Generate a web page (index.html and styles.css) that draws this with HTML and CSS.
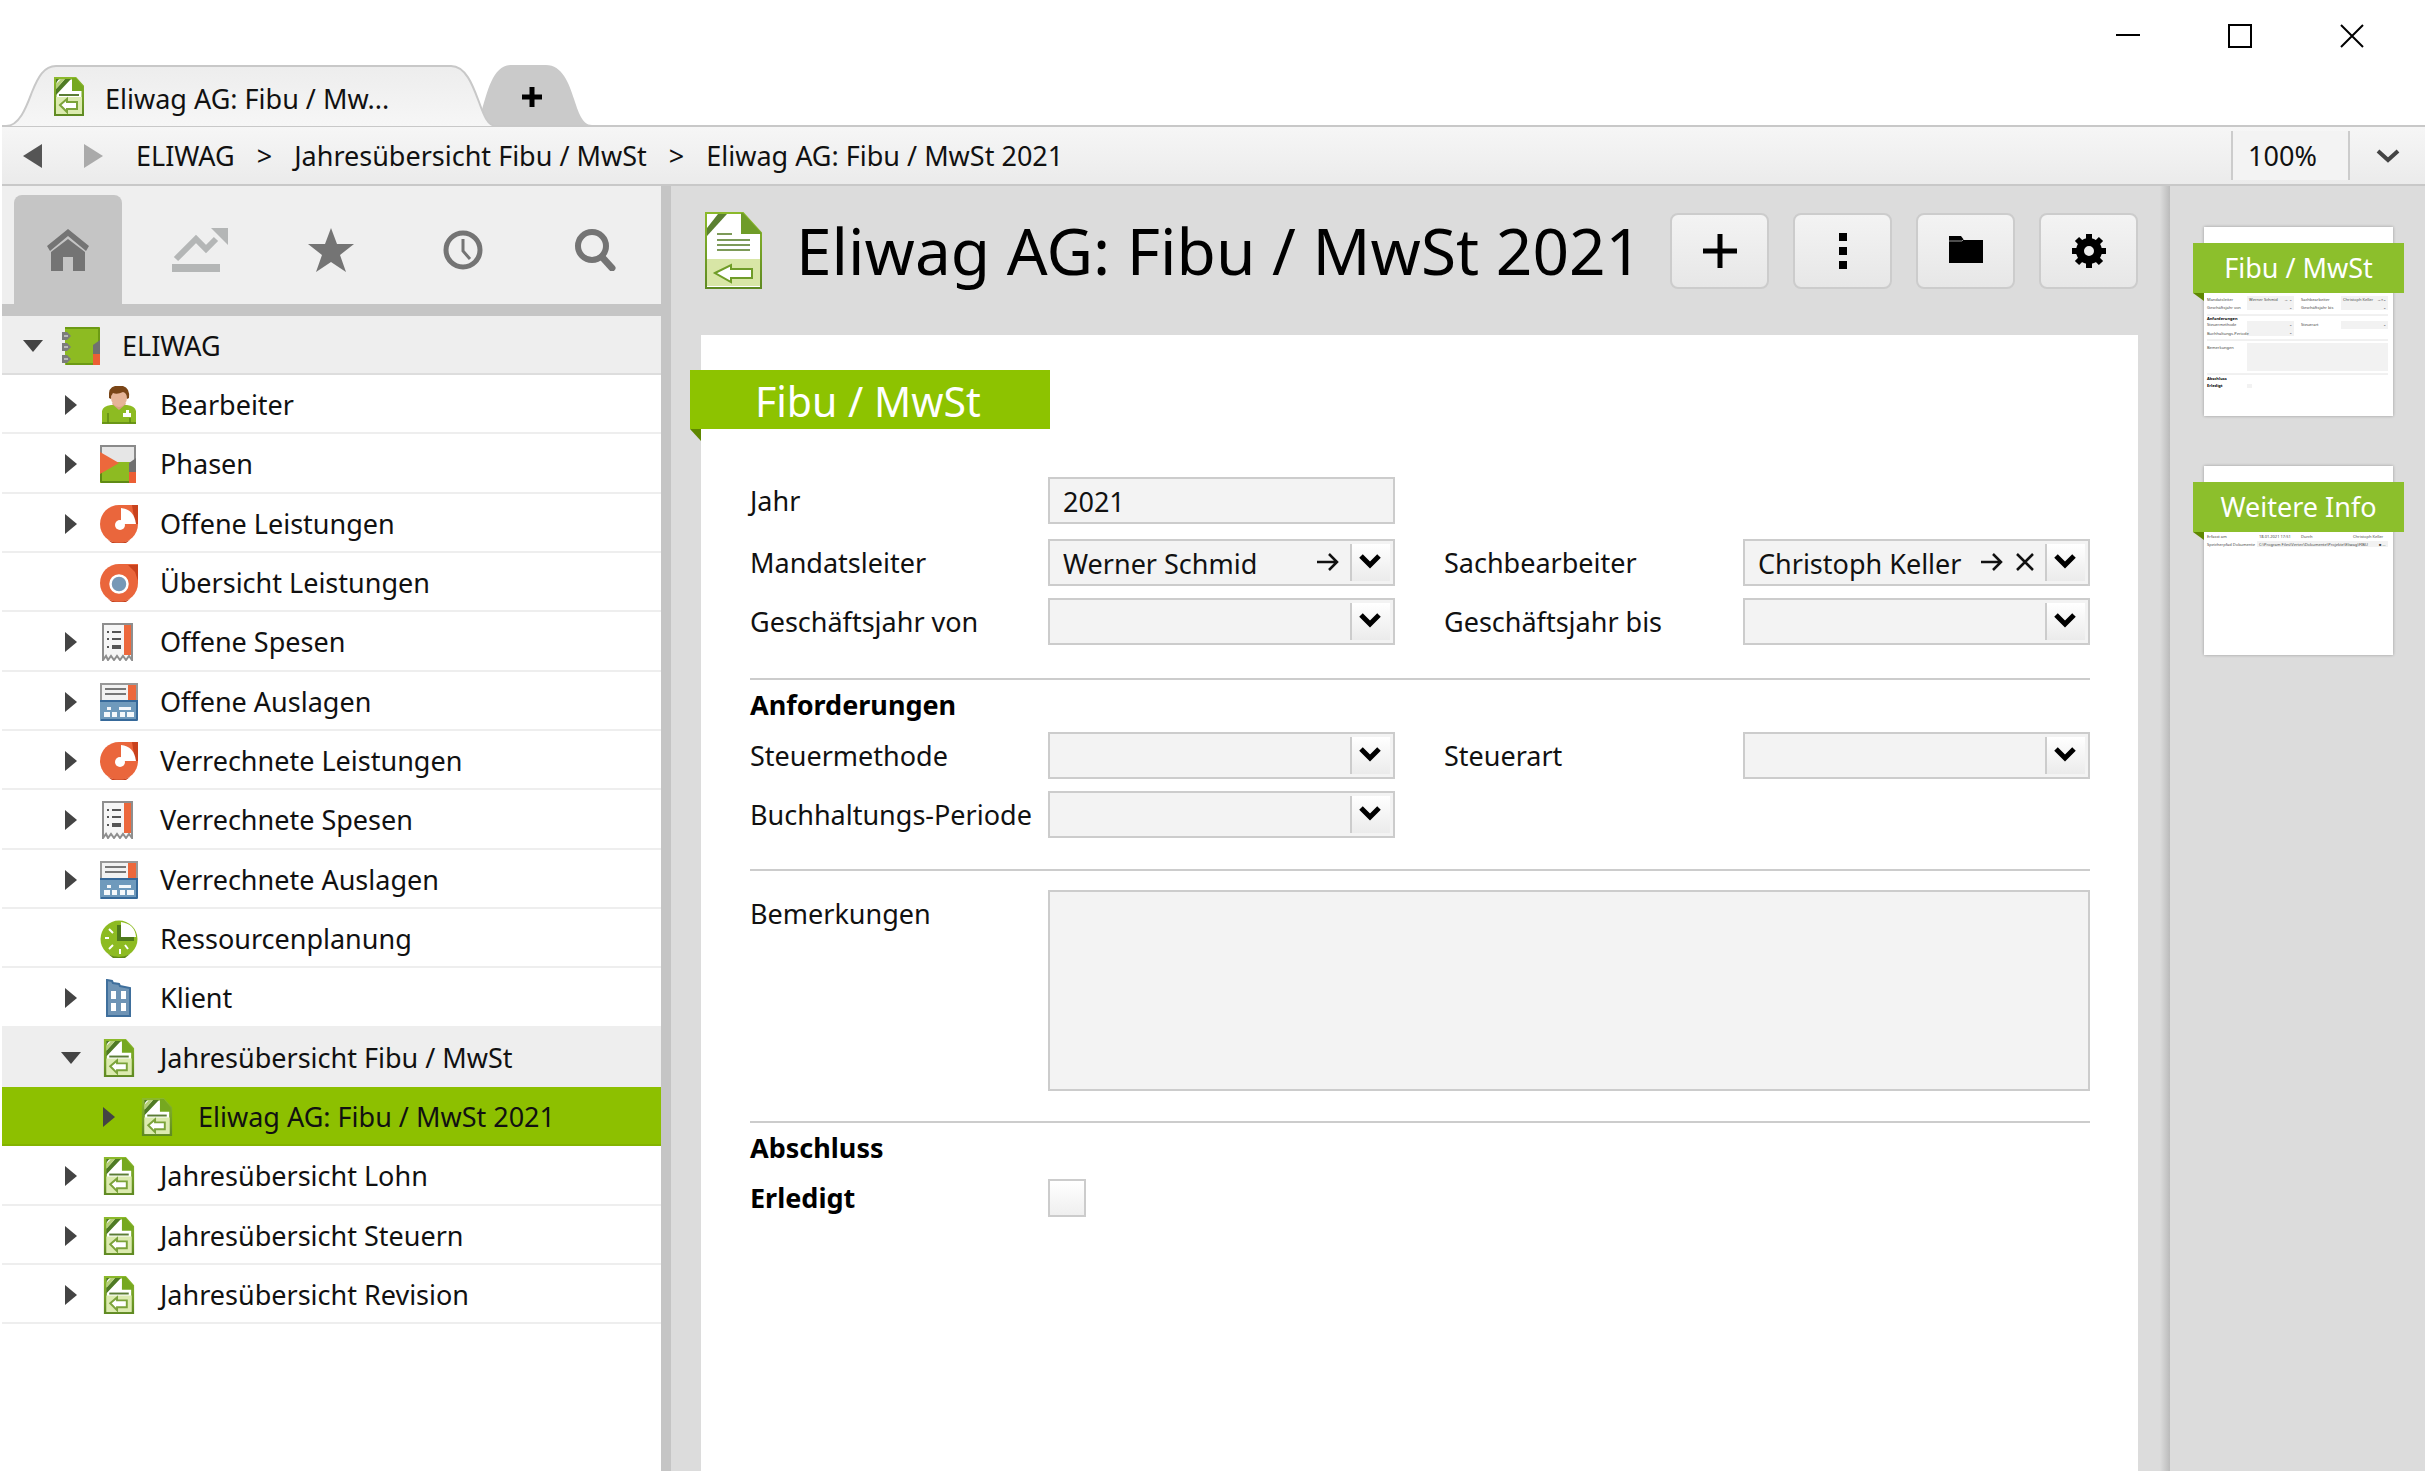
FILE: index.html
```html
<!DOCTYPE html>
<html lang="de">
<head>
    <meta charset="UTF-8">
    <meta name="viewport" content="width=device-width, initial-scale=1.0">
    <title>Eliwag AG: Fibu / MwSt 2021</title>
    <link rel="stylesheet" href="styles.css">
</head>
<body>
    <!-- Icon-Sammlung -->
    <svg class="sprite" aria-hidden="true">
        <defs>
            <linearGradient id="gradTab" x1="0" y1="0" x2="0" y2="1">
                <stop offset="0" stop-color="#ededed"/>
                <stop offset="1" stop-color="#f6f6f6"/>
            </linearGradient>
            <linearGradient id="gradDoc" x1="0" y1="0" x2="0" y2="1">
                <stop offset="0" stop-color="#8bb92b"/>
                <stop offset="1" stop-color="#5f8a22"/>
            </linearGradient>
        </defs>
        <symbol id="i-doc" viewBox="0 0 30 39">
            <path d="M1 1h20l8 9v28H1z" fill="#fff" stroke="url(#gradDoc)" stroke-width="3"/>
            <path d="M2 20h26v17H2z" fill="#dcebb0"/>
            <path d="M18 1h4l7 9v4H18z" fill="#76a820"/>
            <path d="M2 2h3L2 6zM2 12L11 2h6L2 18z" fill="#4f7a24"/>
            <path d="M2 7l5-5h4L2 12z" fill="#b4cf78"/>
            <path d="M5 18h20" stroke="#5b7d35" stroke-width="2"/>
            <path d="M6 28l7-6v3h10v7H13v3z" fill="#fff" stroke="#7ba33a" stroke-width="2"/>
        </symbol>
        <symbol id="i-doc-large" viewBox="0 0 57 77">
            <path d="M1 1h37l18 20v55H1z" fill="#fff" stroke="url(#gradDoc)" stroke-width="2"/>
            <path d="M2 47h53v27H2z" fill="#d8e6a6"/>
            <path d="M36 1h2l18 20v1H36z" fill="#6f9c28"/>
            <path d="M2 16L13 2h9L2 24z" fill="#5b8030"/>
            <path d="M12 22h15M12 28h33M12 33h33M12 38h33" stroke="#7d9a58" stroke-width="2"/>
            <path d="M10 61l16-8v4h21v9H26v4z" fill="#fff" stroke="#6f9c28" stroke-width="2"/>
        </symbol>
        <symbol id="i-book" viewBox="0 0 38 38">
            <path d="M3 0h35v38H3z" fill="#8dbb22"/>
            <path d="M4 37h33M37 1v36M3 1h34" stroke="#6c9a14" stroke-width="2" fill="none"/>
            <path d="M38 13v14l-7 4V18z" fill="#707070"/>
            <path d="M31 27h7v11h-7z" fill="#ec5f35"/>
            <path d="M0 5h5l4 4-4 4H0zM0 16h5l4 4-4 4H0zM0 28h5l4 4-4 4H0z" fill="#7b7b7b"/>
            <path d="M2 9h4M2 20h4M2 32h4" stroke="#b9b9b9" stroke-width="2"/>
        </symbol>
        <symbol id="i-person" viewBox="0 0 38 38">
            <path d="M2 38V25q1-5 9-6h16q8 1 9 6v13z" fill="#8dbb22"/>
            <path d="M2 37h34M8 27v10M30 32v5" stroke="#5f8a14" stroke-width="1.5"/>
            <path d="M12 18l7 6 7-6-2-3H14z" fill="#d9a184"/>
            <ellipse cx="19" cy="12" rx="8" ry="9" fill="#e6b497"/>
            <path d="M9 12Q8 1 15 0h8q7 2 6 12l-2 1q0-6-4-7-6 3-10 1-2 2-2 6z" fill="#7a4516"/>
            <path d="M23 27h8v4h-8zM26 24h3v3h-3z" fill="#fff"/>
        </symbol>
        <symbol id="i-phase" viewBox="0 0 38 38">
            <path d="M1 1h34v36H1z" fill="#e6e6e6" stroke="#8a8a8a" stroke-width="2"/>
            <path d="M0 17h29l7 1v20H0z" fill="#8dbb22"/>
            <path d="M1 37h35M1 17v20" stroke="#5f8a14" stroke-width="2"/>
            <path d="M0 7l19 11L0 29z" fill="#ec683c"/>
            <path d="M36 13v14l-7 4V18z" fill="#707070"/>
            <path d="M29 27h7v11h-7z" fill="#ec5f35"/>
        </symbol>
        <symbol id="i-pie" viewBox="0 0 38 38">
            <path d="M19 0h19v19A19 19 0 1 1 19 0z" fill="#ea663c"/>
            <path d="M32 0h6v19h-3zM8 35q11 5 22 0l-4 3H12z" fill="#c9421d"/>
            <path d="M21 3q13 1 15 16H21z" fill="#fff"/>
            <circle cx="20" cy="20" r="5" fill="#fff"/>
        </symbol>
        <symbol id="i-ring" viewBox="0 0 38 38">
            <path d="M19 0h19v19A19 19 0 1 1 19 0z" fill="#ea663c"/>
            <path d="M28 1h10v16l-3-9zM8 35q11 5 22 0l-4 3H12z" fill="#c9421d"/>
            <circle cx="19" cy="20" r="8.5" fill="#7798b6" stroke="#fff" stroke-width="2.5"/>
        </symbol>
        <symbol id="i-receipt" viewBox="0 0 38 38">
            <path d="M3 1h29v36l-3-4-3 4-3-4-3 4-3-4-3 4-3-4-3 4-2-4-3 4z" fill="#f6f6f6" stroke="#8e8e8e" stroke-width="2"/>
            <path d="M24 2h7v30h-7z" fill="#ec683c"/>
            <path d="M7 9h2M12 9h9M7 16h2M12 16h9M7 24h2" stroke="#555" stroke-width="2"/>
            <path d="M12 24h9" stroke="#555" stroke-width="4"/>
        </symbol>
        <symbol id="i-register" viewBox="0 0 38 38">
            <path d="M1 1h36v17H1z" fill="#f2f2f2" stroke="#989898" stroke-width="2"/>
            <path d="M5 6h21M5 11h21" stroke="#777" stroke-width="2"/>
            <path d="M28 2h8v15h-8z" fill="#ec683c"/>
            <path d="M0 17h38v21H0z" fill="#6f9abc"/>
            <path d="M1 37h36M37 18v19M0 18h38" stroke="#36699a" stroke-width="2"/>
            <path d="M7 24h4v3H7zM19 24h12v3H19zM4 29h6v5H4zM12 29h5v5h-5zM20 29h5v5h-5zM27 29h7v5h-7z" fill="#f4f8fb"/>
        </symbol>
        <symbol id="i-timer" viewBox="0 0 38 38">
            <circle cx="19" cy="19" r="18.5" fill="#8dbb22"/>
            <path d="M21 2q14 2 15 15H21z" fill="#fff"/>
            <path d="M8 34q11 6 22 0l-5 4H13z" fill="#5f8a14"/>
            <path d="M19 5v14h15" stroke="#4f7a1c" stroke-width="4" fill="none"/>
            <path d="M5 18h4M9 9l4 4M9 29l4-4M20 29v5M25 25l3 4" stroke="#fff" stroke-width="2"/>
        </symbol>
        <symbol id="i-building" viewBox="0 0 38 38">
            <path d="M7 1l5 1 1 2 6 1 1 2 10 2v28H7z" fill="#6f94b5" stroke="#3f6f9c" stroke-width="2"/>
            <path d="M11 12h5v8h-5zM21 12h5v8h-5zM11 24h5v8h-5zM21 24h5v8h-5z" fill="#fff"/>
        </symbol>
        <symbol id="i-right" viewBox="0 0 12 20"><path d="M0 0l12 10L0 20z" fill="#444"/></symbol>
        <symbol id="i-down" viewBox="0 0 20 12"><path d="M0 0h20L10 12z" fill="#444"/></symbol>
        <symbol id="i-chevron" viewBox="0 0 24 16"><path d="M3 3l9 9 9-9" fill="none" stroke="#000" stroke-width="5"/></symbol>
        <symbol id="i-goto" viewBox="0 0 22 20"><path d="M0 10h20M12 2l8 8-8 8" fill="none" stroke="#111" stroke-width="2.5"/></symbol>
        <symbol id="i-clear" viewBox="0 0 18 18"><path d="M1 1l16 16M17 1L1 17" fill="none" stroke="#111" stroke-width="2.5"/></symbol>
    </svg>

    <div class="window">
        <header class="titlebar">
            <nav class="tabs">
                <a class="tab" href="#">
                    <svg class="tab-shape" viewBox="0 0 494 62"><path d="M0 61h4C18 61 25 40 30 27 36 12 42 1 54 1h395c15 0 22 20 28 36 5 14 9 24 17 24" fill="url(#gradTab)" stroke="#c8c8c8" stroke-width="2"/></svg>
                    <svg class="tab-icon"><use href="#i-doc"/></svg>
                    <span>Eliwag AG: Fibu / Mw...</span>
                </a>
                <button class="tab-new" aria-label="Neuer Tab">
                    <svg viewBox="0 0 112 60"><path d="M0 52C8 24 13 0 32 0h34c16 0 23 18 28 34 4 12 8 26 18 26H0z" fill="#cacaca"/><path d="M52 22v20M42 32h20" stroke="#000" stroke-width="5"/></svg>
                </button>
            </nav>
            <div class="window-buttons">
                <button aria-label="Minimieren"><svg viewBox="0 0 24 24"><path d="M0 11h24" stroke="#000" stroke-width="2"/></svg></button>
                <button aria-label="Maximieren"><svg viewBox="0 0 24 24"><path d="M1 1h22v22H1z" fill="none" stroke="#000" stroke-width="2"/></svg></button>
                <button aria-label="Schliessen"><svg viewBox="0 0 24 24"><path d="M1 1l22 22M23 1L1 23" stroke="#000" stroke-width="2"/></svg></button>
            </div>
        </header>

        <div class="pathbar">
            <button class="nav-arrow" aria-label="Zurück"><svg viewBox="0 0 19 24"><path d="M19 0v24L0 12z" fill="#555"/></svg></button>
            <button class="nav-arrow" aria-label="Vorwärts"><svg viewBox="0 0 19 24"><path d="M0 0v24l19-12z" fill="#aaa"/></svg></button>
            <nav class="breadcrumb">
                <a href="#">ELIWAG</a>
                <span>&gt;</span>
                <a href="#">Jahresübersicht Fibu / MwSt</a>
                <span>&gt;</span>
                <a href="#">Eliwag AG: Fibu / MwSt 2021</a>
            </nav>
            <button class="zoom-value">100%</button>
            <button class="zoom-menu" aria-label="Zoom wählen"><svg viewBox="0 0 24 14"><path d="M2 2l10 9L22 2" fill="none" stroke="#444" stroke-width="4"/></svg></button>
        </div>

        <div class="workspace">
            <aside class="sidebar">
                <div class="side-tabs">
                    <button class="active" aria-label="Start"><svg viewBox="0 0 42 42"><path d="M0 17L21 0l21 17-3 5L21 7 3 22z" fill="#747474"/><path d="M21 10l17 13v19H26V28H16v14H4V23z" fill="#747474"/></svg></button>
                    <button aria-label="Auswertungen"><svg class="wide" viewBox="0 0 56 44"><path d="M0 36h48v8H0z" fill="#b4b6b6"/><path d="M4 31L24 11l10 10 10-10" fill="none" stroke="#b4b6b6" stroke-width="6"/><path d="M39 0h17v17z" fill="#b4b6b6"/></svg></button>
                    <button aria-label="Favoriten"><svg class="star" viewBox="0 0 46 44"><path d="M23 0l6 16h17L32 27l6 17-15-10L8 44l6-17L0 16h17z" fill="#747474"/></svg></button>
                    <button aria-label="Verlauf"><svg viewBox="0 0 42 42"><circle cx="21" cy="21" r="17" fill="none" stroke="#747474" stroke-width="5"/><path d="M21 10v12l7 8" fill="none" stroke="#747474" stroke-width="3"/></svg></button>
                    <button aria-label="Suchen"><svg viewBox="0 0 42 42"><circle cx="18" cy="17" r="14" fill="none" stroke="#747474" stroke-width="6"/><path d="M28 28l10 11" stroke="#747474" stroke-width="7" stroke-linecap="round"/></svg></button>
                </div>
                <ul class="tree">
                    <li><a class="open root" href="#"><span class="toggle"><svg class="down"><use href="#i-down"/></svg></span><svg class="icon"><use href="#i-book"/></svg>ELIWAG</a></li>
                    <li><a href="#"><span class="toggle"><svg><use href="#i-right"/></svg></span><svg class="icon"><use href="#i-person"/></svg>Bearbeiter</a></li>
                    <li><a href="#"><span class="toggle"><svg><use href="#i-right"/></svg></span><svg class="icon"><use href="#i-phase"/></svg>Phasen</a></li>
                    <li><a href="#"><span class="toggle"><svg><use href="#i-right"/></svg></span><svg class="icon"><use href="#i-pie"/></svg>Offene Leistungen</a></li>
                    <li><a href="#"><span class="toggle"></span><svg class="icon"><use href="#i-ring"/></svg>Übersicht Leistungen</a></li>
                    <li><a href="#"><span class="toggle"><svg><use href="#i-right"/></svg></span><svg class="icon"><use href="#i-receipt"/></svg>Offene Spesen</a></li>
                    <li><a href="#"><span class="toggle"><svg><use href="#i-right"/></svg></span><svg class="icon"><use href="#i-register"/></svg>Offene Auslagen</a></li>
                    <li><a href="#"><span class="toggle"><svg><use href="#i-right"/></svg></span><svg class="icon"><use href="#i-pie"/></svg>Verrechnete Leistungen</a></li>
                    <li><a href="#"><span class="toggle"><svg><use href="#i-right"/></svg></span><svg class="icon"><use href="#i-receipt"/></svg>Verrechnete Spesen</a></li>
                    <li><a href="#"><span class="toggle"><svg><use href="#i-right"/></svg></span><svg class="icon"><use href="#i-register"/></svg>Verrechnete Auslagen</a></li>
                    <li><a href="#"><span class="toggle"></span><svg class="icon"><use href="#i-timer"/></svg>Ressourcenplanung</a></li>
                    <li><a href="#"><span class="toggle"><svg><use href="#i-right"/></svg></span><svg class="icon"><use href="#i-building"/></svg>Klient</a></li>
                    <li><a class="open" href="#"><span class="toggle"><svg class="down"><use href="#i-down"/></svg></span><svg class="icon"><use href="#i-doc"/></svg>Jahresübersicht Fibu / MwSt</a></li>
                    <li><a class="selected" href="#"><span class="toggle"><svg><use href="#i-right"/></svg></span><svg class="icon"><use href="#i-doc"/></svg>Eliwag AG: Fibu / MwSt 2021</a></li>
                    <li><a href="#"><span class="toggle"><svg><use href="#i-right"/></svg></span><svg class="icon"><use href="#i-doc"/></svg>Jahresübersicht Lohn</a></li>
                    <li><a href="#"><span class="toggle"><svg><use href="#i-right"/></svg></span><svg class="icon"><use href="#i-doc"/></svg>Jahresübersicht Steuern</a></li>
                    <li><a href="#"><span class="toggle"><svg><use href="#i-right"/></svg></span><svg class="icon"><use href="#i-doc"/></svg>Jahresübersicht Revision</a></li>
                </ul>
            </aside>

            <main class="content">
                <div class="content-head">
                    <svg class="head-icon"><use href="#i-doc-large"/></svg>
                    <h1>Eliwag AG: Fibu / MwSt 2021</h1>
                    <div class="actions">
                        <button aria-label="Neu"><svg viewBox="0 0 36 36"><path d="M18 1v34M1 18h34" stroke="#000" stroke-width="5"/></svg></button>
                        <button aria-label="Mehr"><svg viewBox="0 0 36 36"><path d="M14 0h8v8h-8zM14 14h8v8h-8zM14 28h8v8h-8z"/></svg></button>
                        <button aria-label="Ordner"><svg viewBox="0 0 36 36"><path d="M1 3h12l3 4h19v23H1z"/><path d="M1 8h13l2-2" stroke="#999" fill="none"/></svg></button>
                        <button aria-label="Einstellungen"><svg viewBox="0 0 36 36"><circle cx="18" cy="18" r="9" fill="none" stroke="#000" stroke-width="8"/><path d="M18 1v7M18 28v7M1 18h7M28 18h7M6 6l5 5M25 25l5 5M30 6l-5 5M11 25l-5 5" stroke="#000" stroke-width="6"/></svg></button>
                    </div>
                </div>

                <form class="sheet">
                    <h2 class="ribbon">Fibu / MwSt</h2>

                    <section class="fields first">
                        <label for="jahr">Jahr</label>
                        <input class="text" id="jahr" type="text" value="2021">
                    </section>
                    <section class="fields">
                        <label for="mandatsleiter">Mandatsleiter</label>
                        <div class="combo">
                            <select id="mandatsleiter"><option>Werner Schmid</option></select>
                            <div class="combo-links">
                                <button type="button" aria-label="Öffnen"><svg class="goto"><use href="#i-goto"/></svg></button>
                            </div>
                            <svg class="chevron"><use href="#i-chevron"/></svg>
                        </div>
                        <label class="second" for="sachbearbeiter">Sachbearbeiter</label>
                        <div class="combo">
                            <select id="sachbearbeiter"><option>Christoph Keller</option></select>
                            <div class="combo-links">
                                <button type="button" aria-label="Öffnen"><svg class="goto"><use href="#i-goto"/></svg></button>
                                <button type="button" aria-label="Entfernen"><svg class="clear"><use href="#i-clear"/></svg></button>
                            </div>
                            <svg class="chevron"><use href="#i-chevron"/></svg>
                        </div>
                        <label for="gj-von">Geschäftsjahr von</label>
                        <div class="combo">
                            <select id="gj-von"><option></option></select>
                            <svg class="chevron"><use href="#i-chevron"/></svg>
                        </div>
                        <label class="second" for="gj-bis">Geschäftsjahr bis</label>
                        <div class="combo">
                            <select id="gj-bis"><option></option></select>
                            <svg class="chevron"><use href="#i-chevron"/></svg>
                        </div>
                    </section>

                    <h3>Anforderungen</h3>
                    <section class="fields">
                        <label for="methode">Steuermethode</label>
                        <div class="combo">
                            <select id="methode"><option></option></select>
                            <svg class="chevron"><use href="#i-chevron"/></svg>
                        </div>
                        <label class="second" for="steuerart">Steuerart</label>
                        <div class="combo">
                            <select id="steuerart"><option></option></select>
                            <svg class="chevron"><use href="#i-chevron"/></svg>
                        </div>
                        <label for="periode">Buchhaltungs-Periode</label>
                        <div class="combo">
                            <select id="periode"><option></option></select>
                            <svg class="chevron"><use href="#i-chevron"/></svg>
                        </div>
                    </section>

                    <section class="fields notes">
                        <label for="bemerkungen">Bemerkungen</label>
                        <textarea id="bemerkungen"></textarea>
                    </section>

                    <h3>Abschluss</h3>
                    <section class="fields">
                        <label class="strong" for="erledigt">Erledigt</label>
                        <input class="check" id="erledigt" type="checkbox">
                    </section>
                </form>
            </main>

            <aside class="pages">
                <a class="page" href="#">
                    <span class="page-title">Fibu / MwSt</span>
                    <svg class="preview" viewBox="0 0 189 189">
                        <g fill="#f2f2f2">
                            <path d="M43 69h47v14H43zM137 69h47v14h-47zM43 94h47v15H43zM137 94h47v8h-47zM43 116h141v28H43zM43 157h5v4h-5z"/>
                        </g>
                        <path d="M3 88h181M3 113h181M3 147h181" stroke="#e2e2e2"/>
                        <g class="tiny">
                            <text x="3" y="74">Mandatsleiter</text><text x="45" y="74">Werner Schmid</text><text x="80" y="74">→ ⌄</text>
                            <text x="97" y="74">Sachbearbeiter</text><text x="139" y="74">Christoph Keller</text><text x="173" y="74">→×⌄</text>
                            <text x="3" y="82">Geschäftsjahr von</text><text x="85" y="82">⌄</text>
                            <text x="97" y="82">Geschäftsjahr bis</text><text x="179" y="82">⌄</text>
                            <text class="b" x="3" y="93">Anforderungen</text>
                            <text x="3" y="99">Steuermethode</text><text x="85" y="99">⌄</text>
                            <text x="97" y="99">Steuerart</text><text x="179" y="99">⌄</text>
                            <text x="3" y="108">Buchhaltungs-Periode</text><text x="85" y="107">⌄</text>
                            <text x="3" y="122">Bemerkungen</text>
                            <text class="b" x="3" y="153">Abschluss</text>
                            <text class="b" x="3" y="160">Erledigt</text>
                        </g>
                    </svg>
                </a>
                <a class="page" href="#">
                    <span class="page-title">Weitere Info</span>
                    <svg class="preview" viewBox="0 0 189 189">
                        <path d="M53 75h131v6H53z" fill="#f2f2f2"/>
                        <g class="tiny">
                            <text x="3" y="72">Erfasst am</text><text x="55" y="72">18.01.2021 17:51</text><text x="97" y="72">Durch</text><text x="149" y="72">Christoph Keller</text>
                            <text x="3" y="80">Speicherpfad Dokumente</text><text x="55" y="80">C:\Program Files\Vertec\Dokumente\Projekte\Eliwag\FIBU</text><text x="175" y="80">■ ...</text>
                        </g>
                    </svg>
                </a>
            </aside>
        </div>
    </div>
</body>
</html>
```
FILE: styles.css
```css
* {
    box-sizing: border-box;
}
body {
    margin: 0;
    font-family: "Noto Sans", "Open Sans", sans-serif;
    font-size: 27px;
    line-height: 36px;
    color: #111;
    background-color: #fff;
}
button,
input,
select,
textarea {
    font: inherit;
    color: inherit;
    margin: 0;
}
button {
    padding: 0;
    border: none;
    background: none;
    cursor: pointer;
    display: flex;
    align-items: center;
    justify-content: center;
}
a {
    color: inherit;
    text-decoration: none;
}
svg {
    display: block;
    flex: none;
}
.sprite {
    position: absolute;
    width: 0;
    height: 0;
}
.window {
    display: flex;
    flex-direction: column;
    min-height: 100vh;
    padding: 0 2px;
}

/* Titelleiste mit Tabs */
.titlebar {
    display: flex;
    justify-content: space-between;
    height: 125px;
}
.tabs {
    display: flex;
    align-items: flex-end;
}
.tab {
    position: relative;
    z-index: 1;
    display: flex;
    align-items: center;
    gap: 21px;
    width: 494px;
    height: 62px;
    margin-bottom: -2px;
    padding: 6px 60px 0 52px;
    white-space: nowrap;
}
.tab-shape {
    position: absolute;
    left: 0;
    top: 0;
    width: 494px;
    height: 62px;
    z-index: -1;
}
.tab-icon {
    width: 30px;
    height: 39px;
    margin-top: -6px;
}
.tab-new {
    margin-left: -16px;
}
.tab-new svg {
    width: 112px;
    height: 60px;
}
.window-buttons {
    display: flex;
    align-items: flex-start;
    gap: 88px;
    padding: 24px 61px 0 0;
}
.window-buttons svg {
    width: 24px;
    height: 24px;
}

/* Pfadleiste */
.pathbar {
    display: flex;
    align-items: stretch;
    height: 61px;
    border-top: 2px solid #c8c8c8;
    border-bottom: 2px solid #c8c8c8;
    background: linear-gradient(#f6f6f6, #ebebeb);
    padding-left: 21px;
}
.nav-arrow {
    margin-right: 42px;
}
.nav-arrow + .nav-arrow {
    margin-right: 33px;
}
.nav-arrow svg {
    width: 19px;
    height: 24px;
}
.breadcrumb {
    flex: 1;
    display: flex;
    align-items: center;
    gap: 22px;
    white-space: nowrap;
}
.zoom-value {
    width: 119px;
    margin: 4px 0;
    padding-right: 16px;
    border-left: 2px solid #ccc;
    border-right: 2px solid #ccc;
    background-color: #f3f3f3;
}
.zoom-menu {
    width: 75px;
}
.zoom-menu svg {
    width: 24px;
    height: 14px;
}

.workspace {
    flex: 1;
    display: flex;
}

/* Navigation links */
.sidebar {
    width: 669px;
    flex: none;
    border-right: 10px solid #c5c5c5;
    background-color: #fff;
}
.side-tabs {
    display: flex;
    gap: 24px;
    height: 130px;
    padding: 9px 12px 0;
    border-bottom: 12px solid #c5c5c5;
    background-color: #efefef;
}
.side-tabs button {
    width: 109px;
    border-radius: 8px 8px 0 0;
}
.side-tabs .active {
    background-color: #c5c5c5;
}
.side-tabs svg {
    width: 42px;
    height: 42px;
}
.side-tabs .wide {
    width: 56px;
    height: 44px;
}
.side-tabs .star {
    width: 46px;
    height: 44px;
}
.tree {
    list-style: none;
    margin: 0;
    padding: 0;
}
.tree a {
    display: flex;
    align-items: center;
    height: 59px;
    padding: 2px 0 0 48px;
    border-bottom: 2px solid #eee;
    white-space: nowrap;
}
.tree li:nth-child(3n) a {
    height: 60px;
}
.tree .open {
    background-color: #eee;
}
.tree .root {
    padding-left: 10px;
    border-color: #ddd;
}
.tree .selected {
    padding-left: 86px;
    background-color: #8dc000;
    border-color: #84b400;
}
.toggle {
    width: 42px;
    display: flex;
    justify-content: center;
}
.toggle svg {
    width: 12px;
    height: 20px;
}
.toggle .down {
    width: 20px;
    height: 12px;
}
.icon {
    width: 38px;
    height: 38px;
    margin: 0 22px 0 8px;
}

/* Inhalt */
.content {
    flex: 1;
    display: flex;
    flex-direction: column;
    padding: 26px 32px 0 30px;
    background: linear-gradient(to left, #bbb, #dcdcdc 10px);
}
.content-head {
    display: flex;
    align-items: center;
    padding-left: 4px;
    margin-bottom: 46px;
}
.head-icon {
    width: 57px;
    height: 77px;
}
h1 {
    flex: 1;
    margin: 0 0 0 34px;
    font-size: 64px;
    line-height: 76px;
    font-weight: normal;
    color: #000;
    white-space: nowrap;
}
.actions {
    display: flex;
    gap: 24px;
}
.actions button {
    width: 99px;
    height: 76px;
    border: 2px solid #ccc;
    border-radius: 8px;
    background: linear-gradient(#f3f3f3, #e7e7e7);
}
.actions svg {
    width: 36px;
    height: 36px;
}
.sheet {
    flex: 1;
    padding: 35px 48px 40px 49px;
    background-color: #fff;
}
.ribbon {
    position: relative;
    width: 360px;
    margin: 0 0 48px -60px;
    padding: 4px 0 0 65px;
    font-size: 41px;
    line-height: 55px;
    font-weight: normal;
    color: #fff;
    background-color: #8dc300;
}
.ribbon::after,
.page-title::after {
    content: "";
    position: absolute;
    left: 0;
    top: 100%;
    border-top: 12px solid #5f8700;
    border-left: 11px solid transparent;
}
.fields {
    display: grid;
    grid-template-columns: 298px 1fr 348px 1fr;
    gap: 12px 0;
    align-items: center;
}
.fields.first {
    margin-bottom: 15px;
}
.second {
    padding-left: 49px;
}
.text,
.combo {
    width: 100%;
    height: 47px;
    border: 2px solid #ccc;
    background-color: #f3f3f3;
}
.text {
    padding: 2px 13px 0;
}
.combo {
    position: relative;
}
.combo select {
    width: 100%;
    height: 43px;
    padding: 2px 0 0 13px;
    border: 3px solid #f3f3f3;
    border-width: 3px 3px 3px 0;
    appearance: none;
    background: linear-gradient(to right, #ccc 2px, transparent 2px) right / 40px 100% no-repeat, linear-gradient(#fff, #ebebeb) right / 40px 100% no-repeat, #f3f3f3;
}
.chevron {
    position: absolute;
    right: 11px;
    top: 12px;
    width: 24px;
    height: 16px;
    pointer-events: none;
}
.combo-links {
    position: absolute;
    right: 54px;
    top: 11px;
    display: flex;
    align-items: center;
    gap: 13px;
}
.goto {
    width: 22px;
    height: 20px;
}
.clear {
    width: 18px;
    height: 18px;
}
h3 {
    margin: 33px 0 10px;
    padding-top: 8px;
    border-top: 2px solid #ccc;
    font-size: 27px;
    line-height: 34px;
    color: #000;
}
.notes {
    margin-top: 31px;
    padding-top: 19px;
    border-top: 2px solid #ccc;
    align-items: start;
}
.notes label {
    padding-top: 6px;
}
.notes textarea {
    grid-column: 2 / -1;
    display: block;
    height: 201px;
    padding: 4px 13px;
    border: 2px solid #ccc;
    border-radius: 0;
    background-color: #f3f3f3;
    resize: none;
}
.notes + h3 {
    margin-top: 30px;
    margin-bottom: 14px;
}
.strong {
    font-weight: bold;
    color: #000;
}
.check {
    appearance: none;
    width: 38px;
    height: 38px;
    border: 2px solid #ccc;
    background: linear-gradient(#fff, #efefef);
}

/* Seitenvorschau rechts */
.pages {
    flex: none;
    width: 255px;
    padding: 41px 32px 0 34px;
    background-color: #dcdcdc;
}
.page {
    position: relative;
    display: block;
    margin-bottom: 50px;
    background-color: #fff;
    box-shadow: 0 0 3px rgba(0,0,0,0.3);
}
.preview {
    width: 100%;
}
.page-title {
    position: absolute;
    left: -11px;
    right: -11px;
    top: 16px;
    padding: 7px 0;
    line-height: 36px;
    color: #fff;
    text-align: center;
    background-color: #8cbf2c;
}
.page-title::after {
    border-top-width: 8px;
}
.tiny {
    font-size: 4px;
    fill: #444;
}
.tiny .b {
    font-weight: bold;
    fill: #000;
}
```
